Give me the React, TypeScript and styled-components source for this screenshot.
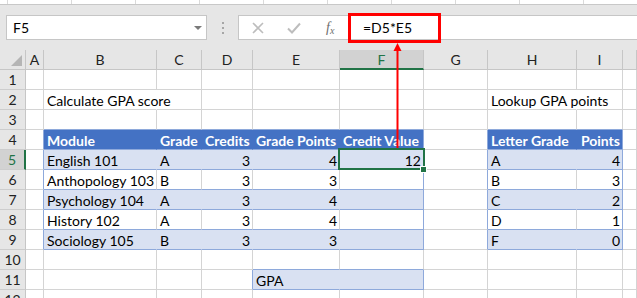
import React from 'react';
import styled, { createGlobalStyle, css } from 'styled-components';

const FONT = `Lato, "Open Sans", "Liberation Sans", sans-serif`;
const GRID = '#d4d4d4';
const TBORDER = '#8ea9db';
const BAND = '#d9e1f2';
const HEAD = '#4472c4';
const GREEN = '#217346';

const Global = createGlobalStyle`
  html, body { margin: 0; padding: 0; background: #fff; }
  body { font-family: ${FONT}; }
`;

const Root = styled.div`
  position: relative;
  width: 637px;
  height: 298px;
  overflow: hidden;
  background: #fff;
  font-family: ${FONT};
`;

const TopStrip = styled.div`
  height: 4px;
  border-bottom: 1px solid #c8c8c8;
  background: repeating-linear-gradient(90deg, #fff 0 7px, #dadada 7px 8px, #fff 8px 64px);
`;

const FormulaBar = styled.div`
  display: flex;
  align-items: flex-start;
  box-sizing: border-box;
  height: 45px;
  padding: 10px 0 0 6px;
  background: #e6e6e6;
`;

const NameBox = styled.div`
  box-sizing: border-box;
  width: 201px;
  height: 25px;
  flex-shrink: 0;
  background: #fff;
  border: 1px solid #c6c6c6;
  display: flex;
  align-items: center;
  justify-content: space-between;
  padding: 0 4px 0 6px;
  font-size: 14px;
  color: #000;
`;

const DropArrow = styled.span`
  width: 0;
  height: 0;
  border-left: 4px solid transparent;
  border-right: 4px solid transparent;
  border-top: 4px solid #7a7a7a;
`;

const Grip = styled.div`
  width: 31px;
  height: 25px;
  flex-shrink: 0;
  display: flex;
  flex-direction: column;
  align-items: center;
  justify-content: center;
  gap: 3px;
`;

const GripDot = styled.span`
  width: 2px;
  height: 2px;
  background: #a6a6a6;
`;

const FxBox = styled.div`
  box-sizing: border-box;
  flex: 1;
  height: 25px;
  background: #fff;
  border: 1px solid #c6c6c6;
  border-right: none;
  display: flex;
  align-items: center;
  padding-left: 13px;
`;

const IconSlot = styled.span<{ $ml: number }>`
  display: flex;
  margin-left: ${p => p.$ml}px;
  flex-shrink: 0;
`;

const Fx = styled.span`
  width: 10px;
  margin-left: 25px;
  flex-shrink: 0;
  font-family: "Liberation Serif", serif;
  font-style: italic;
  font-size: 14px;
  color: #6e6e6e;
  line-height: 1;
  white-space: nowrap;
  & > small {
    font-size: 10px;
    position: relative;
    top: 2px;
  }
`;

const FormulaText = styled.span`
  box-sizing: border-box;
  width: 93px;
  height: 30px;
  margin-left: 12px;
  flex-shrink: 0;
  border: 3px solid #ff0000;
  padding-left: 12px;
  display: flex;
  align-items: center;
  font-size: 14px;
  color: #000;
`;

const Sheet = styled.div`
  display: grid;
  grid-template-columns: 26px 18px 113px 45px 51px 87px 84px 64px 89px 46px 1fr;
  grid-auto-rows: 20px;
`;

const Corner = styled.div`
  box-sizing: border-box;
  background: #e6e6e6;
  border-right: 1px solid #c6c6c6;
  border-bottom: 1px solid #c6c6c6;
  display: flex;
  align-items: flex-end;
  justify-content: flex-end;
  padding: 0 3px 3px 0;
`;

const ColHead = styled.div<{ $active?: boolean }>`
  box-sizing: border-box;
  background: ${p => (p.$active ? '#d2d2d2' : '#e6e6e6')};
  border-right: 1px solid #c6c6c6;
  border-bottom: ${p => (p.$active ? `2px solid ${GREEN}` : '1px solid #c6c6c6')};
  color: ${p => (p.$active ? GREEN : '#222')};
  font-size: 14px;
  line-height: 20px;
  text-align: center;
  overflow: hidden;
`;

const RowHead = styled.div<{ $active?: boolean }>`
  box-sizing: border-box;
  background: ${p => (p.$active ? '#d2d2d2' : '#e6e6e6')};
  border-right: ${p => (p.$active ? `2px solid ${GREEN}` : '1px solid #c6c6c6')};
  border-bottom: 1px solid #cdcdcd;
  color: ${p => (p.$active ? GREEN : '#222')};
  font-size: 14px;
  line-height: 20px;
  text-align: center;
`;

type CellProps = {
  $fill?: string;
  $rb: string;
  $bb: string;
  $align: 'left' | 'right';
  $bold?: boolean;
  $color?: string;
  $spill?: boolean;
  $selected?: boolean;
};

const Cell = styled.div<CellProps>`
  box-sizing: border-box;
  border-right: 1px solid ${p => p.$rb};
  border-bottom: 1px solid ${p => p.$bb};
  background: ${p => p.$fill ?? 'transparent'};
  color: ${p => p.$color ?? '#000'};
  font-weight: ${p => (p.$bold ? 700 : 400)};
  font-size: 14px;
  line-height: 21px;
  padding: 0 2px 0 3px;
  text-align: ${p => p.$align};
  white-space: nowrap;
  overflow: ${p => (p.$spill ? 'visible' : 'hidden')};
  ${p =>
    p.$selected &&
    css`
      position: relative;
      overflow: visible;
      z-index: 2;
      &::after {
        content: '';
        position: absolute;
        left: -2px;
        top: -2px;
        right: -2px;
        bottom: -1px;
        border: 2px solid ${GREEN};
        pointer-events: none;
      }
      &::before {
        content: '';
        position: absolute;
        right: -4px;
        bottom: -4px;
        width: 5px;
        height: 5px;
        background: ${GREEN};
        border: 1px solid #fff;
        z-index: 3;
      }
    `}
`;

const ArrowLayer = styled.svg`
  position: absolute;
  left: 0;
  top: 0;
  z-index: 5;
  pointer-events: none;
`;

const LETTERS = ['A', 'B', 'C', 'D', 'E', 'F', 'G', 'H', 'I', 'J'];
const NUMERIC = new Set(['D', 'E', 'I']);

const table1: string[][] = [
  ['Module', 'Grade', 'Credits', 'Grade Points', 'Credit Value'],
  ['English 101', 'A', '3', '4', '12'],
  ['Anthopology 103', 'B', '3', '3', ''],
  ['Psychology 104', 'A', '3', '4', ''],
  ['History 102', 'A', '3', '4', ''],
  ['Sociology 105', 'B', '3', '3', ''],
];

const table2: string[][] = [
  ['Letter Grade', 'Points'],
  ['A', '4'],
  ['B', '3'],
  ['C', '2'],
  ['D', '1'],
  ['F', '0'],
];

function cellSpec(r: number, c: number) {
  const L = LETTERS[c];
  let text = '';
  let rb = GRID;
  let bb = GRID;
  let fill: string | undefined;
  let color: string | undefined;
  let bold = false;
  let align: 'left' | 'right' = 'left';
  let spill = false;

  const inT1 = r >= 4 && r <= 9 && c >= 1 && c <= 5;
  const inT2 = r >= 4 && r <= 9 && c >= 7 && c <= 8;

  if (inT1 || inT2) {
    const header = r === 4;
    const banded = r % 2 === 1;
    const last = inT1 ? c === 5 : c === 8;
    fill = header ? HEAD : banded ? BAND : undefined;
    rb = last ? TBORDER : header ? HEAD : banded ? BAND : GRID;
    bb = TBORDER;
    const data = inT1 ? table1 : table2;
    const idx = inT1 ? c - 1 : c - 7;
    text = data[r - 4][idx];
    if (header) {
      color = '#fff';
      bold = true;
      align = L === 'I' ? 'right' : 'left';
    } else {
      align = NUMERIC.has(L) || (L === 'F' && inT1) ? 'right' : 'left';
    }
  }
  if (r === 3 && ((c >= 1 && c <= 5) || (c >= 7 && c <= 8))) bb = TBORDER;
  if (r >= 4 && r <= 9 && (c === 0 || c === 6)) rb = TBORDER;

  if (r === 2 && c === 1) {
    text = 'Calculate GPA score';
    rb = 'transparent';
    spill = true;
  }
  if (r === 2 && c === 7) {
    text = 'Lookup GPA points';
    rb = 'transparent';
    spill = true;
  }
  if (r === 10 && (c === 4 || c === 5)) bb = TBORDER;
  if (r === 11 && c === 3) rb = TBORDER;
  if (r === 11 && (c === 4 || c === 5)) {
    fill = BAND;
    rb = c === 5 ? TBORDER : BAND;
    bb = TBORDER;
    if (c === 4) text = 'GPA';
  }
  return { text, rb, bb, fill, color, bold, align, spill, selected: r === 5 && c === 5 };
}

const ROWS = Array.from({ length: 12 }, (_, i) => i + 1);

export default function App() {
  return (
    <Root>
      <Global />
      <TopStrip />
      <FormulaBar>
        <NameBox>
          <span>F5</span>
          <DropArrow />
        </NameBox>
        <Grip>
          <GripDot />
          <GripDot />
          <GripDot />
        </Grip>
        <FxBox>
          <IconSlot $ml={0}>
            <svg width="12" height="12" viewBox="0 0 12 12">
              <path d="M1 1 L11 11 M11 1 L1 11" stroke="#bdbdbd" strokeWidth="1.6" fill="none" />
            </svg>
          </IconSlot>
          <IconSlot $ml={23}>
            <svg width="14" height="12" viewBox="0 0 14 12">
              <path d="M1 6.5 L5 10.5 L13 1.5" stroke="#bdbdbd" strokeWidth="2" fill="none" />
            </svg>
          </IconSlot>
          <Fx>
            f<small>x</small>
          </Fx>
          <FormulaText>=D5*E5</FormulaText>
        </FxBox>
      </FormulaBar>
      <Sheet>
        <Corner>
          <svg width="11" height="11" viewBox="0 0 11 11">
            <polygon points="11,0 11,11 0,11" fill="#b5b5b5" />
          </svg>
        </Corner>
        {LETTERS.map(l => (
          <ColHead key={l} $active={l === 'F'}>
            {l === 'J' ? '' : l}
          </ColHead>
        ))}
        {ROWS.map(r => (
          <React.Fragment key={r}>
            <RowHead $active={r === 5}>{r}</RowHead>
            {LETTERS.map((l, c) => {
              const s = cellSpec(r, c);
              return (
                <Cell
                  key={l}
                  $fill={s.fill}
                  $rb={s.rb}
                  $bb={s.bb}
                  $align={s.align}
                  $bold={s.bold}
                  $color={s.color}
                  $spill={s.spill}
                  $selected={s.selected}
                >
                  {s.text}
                </Cell>
              );
            })}
          </React.Fragment>
        ))}
      </Sheet>
      <ArrowLayer width="637" height="298" viewBox="0 0 637 298">
        <line x1="397.5" y1="50" x2="397.5" y2="148" stroke="#ff0000" strokeWidth="2" />
        <polygon points="393.5,51 401.5,51 397.5,43" fill="#ff0000" />
      </ArrowLayer>
    </Root>
  );
}
